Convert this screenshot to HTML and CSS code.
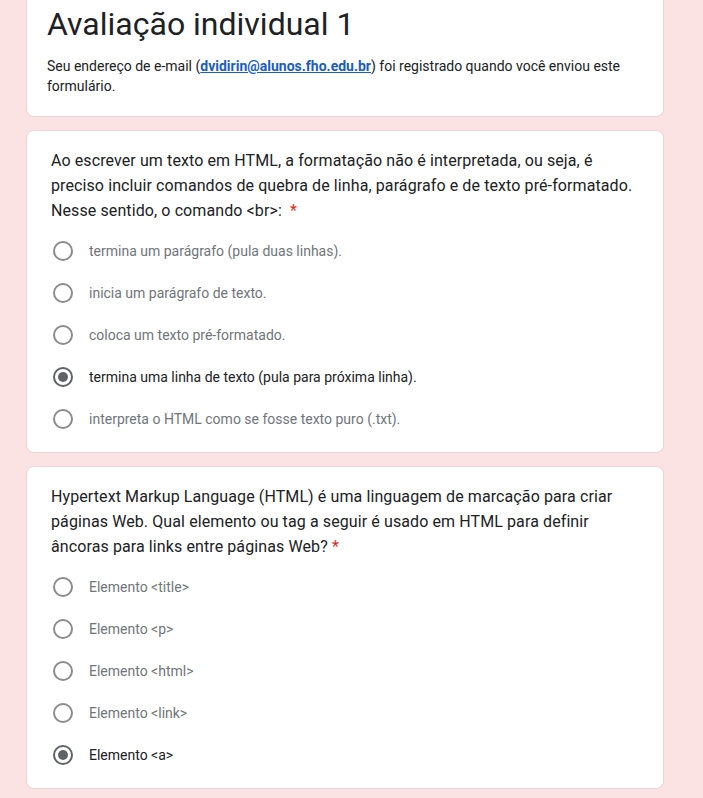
FILE: index.html
```html
<!DOCTYPE html>
<html lang="pt-BR">
<head>
<meta charset="utf-8">
<title>Avaliação individual 1</title>
<link rel="stylesheet" href="styles.css">
</head>
<body>
<div class="form">
  <div class="card header">
    <h1 class="title">Avaliação individual 1</h1>
    <p class="email">Seu endereço de e-mail (<a class="link" href="#">dvidirin@alunos.fho.edu.br</a>) foi registrado quando você enviou este formulário.</p>
  </div>

  <div class="card question">
    <div class="qtext">Ao escrever um texto em HTML, a formatação não é interpretada, ou seja, é preciso incluir comandos de quebra de linha, parágrafo e de texto pré-formatado. Nesse sentido, o comando &lt;br&gt;: &nbsp;<span class="req">*</span></div>
    <div class="options">
      <div class="opt"><span class="radio"></span><span class="label">termina um parágrafo (pula duas linhas).</span></div>
      <div class="opt"><span class="radio"></span><span class="label">inicia um parágrafo de texto.</span></div>
      <div class="opt"><span class="radio"></span><span class="label">coloca um texto pré-formatado.</span></div>
      <div class="opt sel"><span class="radio"></span><span class="label">termina uma linha de texto (pula para próxima linha).</span></div>
      <div class="opt"><span class="radio"></span><span class="label">interpreta o HTML como se fosse texto puro (.txt).</span></div>
    </div>
  </div>

  <div class="card question">
    <div class="qtext">Hypertext Markup Language (HTML) é uma linguagem de marcação para criar páginas Web. Qual elemento ou tag a seguir é usado em HTML para definir âncoras para links entre páginas Web? <span class="req">*</span></div>
    <div class="options">
      <div class="opt"><span class="radio"></span><span class="label">Elemento &lt;title&gt;</span></div>
      <div class="opt"><span class="radio"></span><span class="label">Elemento &lt;p&gt;</span></div>
      <div class="opt"><span class="radio"></span><span class="label">Elemento &lt;html&gt;</span></div>
      <div class="opt"><span class="radio"></span><span class="label">Elemento &lt;link&gt;</span></div>
      <div class="opt sel"><span class="radio"></span><span class="label">Elemento &lt;a&gt;</span></div>
    </div>
  </div>
</div>
</body>
</html>
```
FILE: styles.css
```css
html, body {
  margin: 0;
  padding: 0;
  background: #fae3e2;
}
body {
  font-family: Roboto, "Liberation Sans", Arial, sans-serif;
  color: #202124;
}
.form {
  width: 638px;
  margin: -24px 0 0 26px;
  display: flex;
  flex-direction: column;
  gap: 13px;
}
.card {
  background: #fff;
  border: 1px solid #ecd6d5;
  border-radius: 8px;
  box-sizing: border-box;
}
.header {
  padding: 27px 20px 20px 20px;
}
.title {
  margin: 0;
  font-weight: 400;
  font-size: 32px;
  line-height: 40px;
  color: #202124;
}
.email {
  margin: 12px 0 0;
  font-size: 14px;
  line-height: 20px;
  color: #202124;
}
.link {
  color: #1a5dbf;
  font-weight: 700;
  text-decoration: underline;
}
.question {
  padding: 17px 24px 12px 24px;
}
.qtext {
  font-size: 16px;
  line-height: 25px;
  letter-spacing: 0.1px;
  color: #202124;
}
.req {
  color: #d93025;
}
.options {
  margin-top: 7px;
  display: flex;
  flex-direction: column;
}
.opt {
  height: 42px;
  display: flex;
  align-items: center;
  gap: 16px;
  padding-left: 2px;
}
.radio {
  width: 20px;
  height: 20px;
  border: 2px solid #8c8c8c;
  border-radius: 50%;
  box-sizing: border-box;
  flex: none;
  display: flex;
  align-items: center;
  justify-content: center;
}
.opt.sel .radio {
  border-color: #5f6368;
}
.opt.sel .radio::after {
  content: "";
  width: 10px;
  height: 10px;
  border-radius: 50%;
  background: #5f6368;
}
.label {
  font-size: 14px;
  line-height: 20px;
  color: #70757a;
}
.opt.sel .label {
  color: #202124;
}
```
